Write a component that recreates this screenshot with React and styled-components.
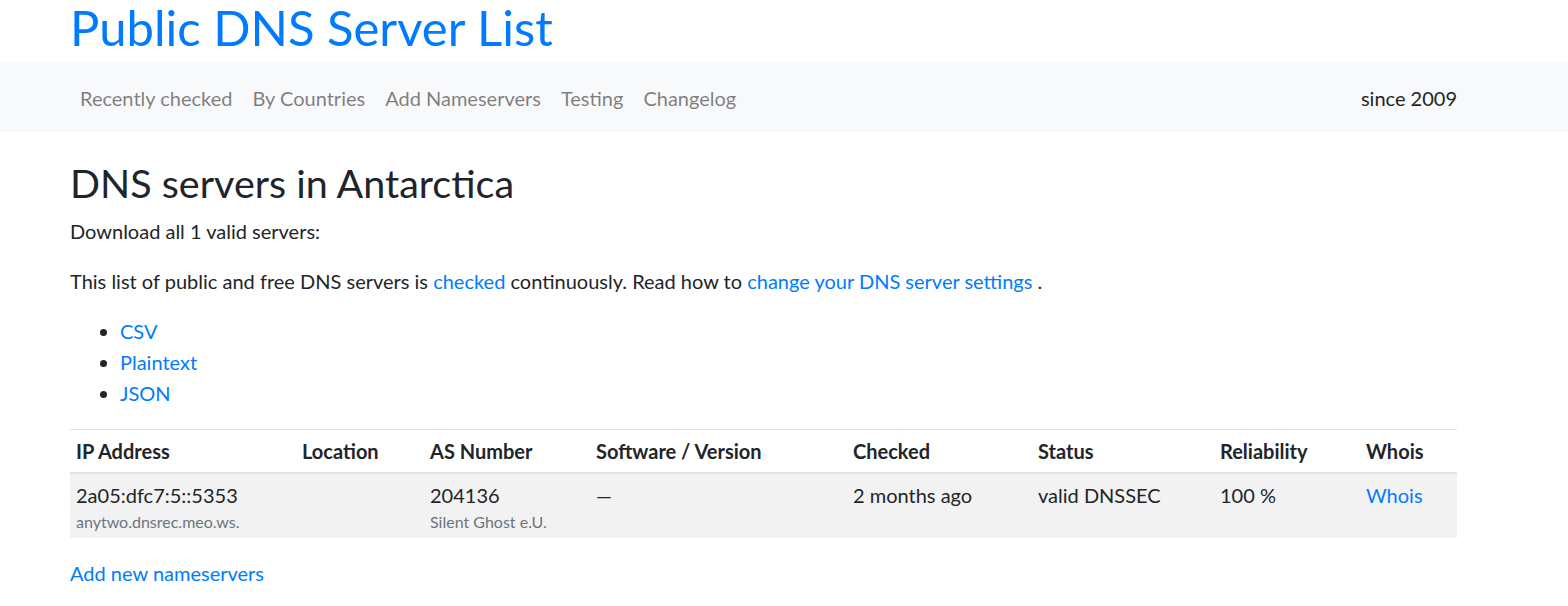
import React from "react";
import styled, { createGlobalStyle } from "styled-components";

const Global = createGlobalStyle`
  html, body { margin: 0; padding: 0; background: #fff; }
  body {
    font-family: Lato, "Segoe UI", "Liberation Sans", sans-serif;
    font-size: 20px;
    line-height: 30px;
    color: #212529;
  }
  * { box-sizing: border-box; }
`;

const Container = styled.div`
  width: 1387px;
  margin-left: 70px;
`;

const Title = styled.h1`
  margin: 0;
  height: 62px;
  font-size: 49px;
  font-weight: 400;
  line-height: 54px;
  color: #007bff;
`;

const TitleLink = styled.a`
  color: #007bff;
  text-decoration: none;
`;

const NavBar = styled.nav`
  background: #f8f9fa;
  height: 70px;
`;

const NavInner = styled(Container)`
  height: 100%;
  display: flex;
  align-items: center;
  justify-content: space-between;
  padding-top: 1px;
`;

const NavList = styled.ul`
  list-style: none;
  margin: 0;
  padding: 0;
  display: flex;
`;

const NavLink = styled.a`
  display: block;
  padding: 10px;
  color: rgba(0, 0, 0, 0.5);
  text-decoration: none;
`;

const NavText = styled.span`
  color: #212529;
`;

const Main = styled(Container)`
  padding-top: 27px;
`;

const H2 = styled.h2`
  margin: 0 0 9px;
  font-size: 39.5px;
  font-weight: 400;
  line-height: 48px;
`;

const P = styled.p`
  margin: 0 0 20px;
`;

const A = styled.a`
  color: #007bff;
  text-decoration: none;
`;

const List = styled.ul`
  margin: 0 0 20px;
  padding-left: 50px;
  li { line-height: 31px; }
`;

const Table = styled.table`
  width: 100%;
  border-collapse: collapse;
  table-layout: fixed;
  margin-bottom: 20px;
`;

const Col = styled.col`
  width: ${(p) => p.$w}px;
`;

const Th = styled.th`
  text-align: left;
  font-weight: 700;
  padding: 6px;
  border-top: 1px solid #dee2e6;
  border-bottom: 2px solid #dee2e6;
  vertical-align: bottom;
`;

const Row = styled.tr`
  background: #f2f2f2;
`;

const Td = styled.td`
  padding: 6px 6px 4px;
  vertical-align: top;
`;

const Small = styled.small`
  display: block;
  font-size: 16px;
  line-height: 24px;
  color: #6c757d;
`;

const cols = [226, 128, 166, 257, 185, 182, 146, 97];
const heads = ["IP Address", "Location", "AS Number", "Software / Version", "Checked", "Status", "Reliability", "Whois"];

export default function App() {
  return (
    <>
      <Global />
      <Container>
        <Title>
          <TitleLink href="#">Public DNS Server List</TitleLink>
        </Title>
      </Container>
      <NavBar>
        <NavInner>
          <NavList>
            <li><NavLink href="#">Recently checked</NavLink></li>
            <li><NavLink href="#">By Countries</NavLink></li>
            <li><NavLink href="#">Add Nameservers</NavLink></li>
            <li><NavLink href="#">Testing</NavLink></li>
            <li><NavLink href="#">Changelog</NavLink></li>
          </NavList>
          <NavText>since 2009</NavText>
        </NavInner>
      </NavBar>
      <Main>
        <H2>DNS servers in Antarctica</H2>
        <P>Download all 1 valid servers:</P>
        <P>
          This list of public and free DNS servers is <A href="#">checked</A> continuously. Read how to{" "}
          <A href="#">change your DNS server settings</A> .
        </P>
        <List>
          <li><A href="#">CSV</A></li>
          <li><A href="#">Plaintext</A></li>
          <li><A href="#">JSON</A></li>
        </List>
        <Table>
          <colgroup>
            {cols.map((w, i) => (
              <Col key={i} $w={w} />
            ))}
          </colgroup>
          <thead>
            <tr>
              {heads.map((h) => (
                <Th key={h}>{h}</Th>
              ))}
            </tr>
          </thead>
          <tbody>
            <Row>
              <Td>
                2a05:dfc7:5::5353
                <Small>anytwo.dnsrec.meo.ws.</Small>
              </Td>
              <Td></Td>
              <Td>
                204136
                <Small>Silent Ghost e.U.</Small>
              </Td>
              <Td>—</Td>
              <Td>2 months ago</Td>
              <Td>valid DNSSEC</Td>
              <Td>100 %</Td>
              <Td><A href="#">Whois</A></Td>
            </Row>
          </tbody>
        </Table>
        <P><A href="#">Add new nameservers</A></P>
      </Main>
    </>
  );
}
